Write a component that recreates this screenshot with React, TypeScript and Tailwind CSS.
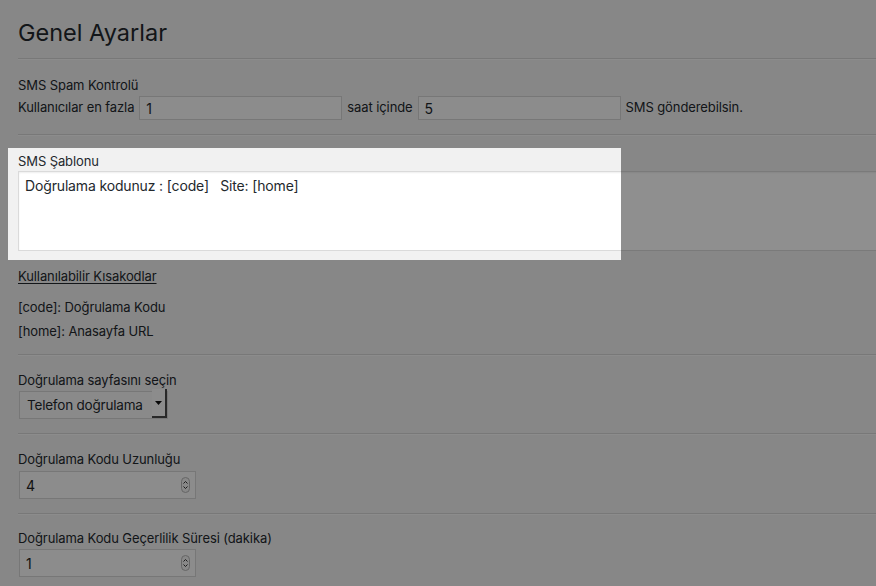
import React from "react";

const font = { fontFamily: "Inter, 'Noto Sans', 'Liberation Sans', sans-serif" };

function Divider() {
  return <div className="h-[2px] w-full border-t border-[#d6d6d6] border-b border-b-[#fafafa]" />;
}

function NumberField({ value }: { value: string }) {
  return (
    <div className="flex h-[28px] w-[177px] items-center justify-between border border-[#d4d4d4] bg-[#f9f9f9] pl-[6px] pr-[5px] text-[14px] text-[#222]">
      <span>{value}</span>
      <span className="flex h-[16px] w-[9px] flex-col items-center justify-center rounded-full border border-[#b5b5b5] bg-[#f3f3f3]">
        <svg width="5" height="10" viewBox="0 0 5 10" fill="none" stroke="#333" strokeWidth="1">
          <path d="M0.5 3.5 L2.5 1.5 L4.5 3.5" />
          <path d="M0.5 6.5 L2.5 8.5 L4.5 6.5" />
        </svg>
      </span>
    </div>
  );
}

export default function App() {
  return (
    <div
      className="relative h-[586px] w-[876px] overflow-hidden bg-[#f1f1f1] text-[13px] tracking-[-0.1px] text-[#23282d]"
      style={font}
    >
      <div className="pt-[18px]">
        <h1 className="pl-[18px] text-[23.5px] leading-[30px] font-normal tracking-normal">Genel Ayarlar</h1>
        <div className="mt-[10px] pl-[18px]">
          <Divider />
        </div>

        {/* spam kontrol */}
        <section className="pl-[18px] pt-[16px]">
          <div className="leading-[18px]">SMS Spam Kontrolü</div>
          <div className="mt-[2px] flex h-[24px] items-center gap-[5px]">
            <span>Kullanıcılar en fazla</span>
            <div className="flex h-[24px] w-[203px] items-center border border-[#d4d4d4] bg-[#f9f9f9] pl-[6px] text-[14px]">
              1
            </div>
            <span>saat içinde</span>
            <div className="flex h-[24px] w-[203px] items-center border border-[#d4d4d4] bg-[#f9f9f9] pl-[6px] text-[14px]">
              5
            </div>
            <span>SMS gönderebilsin.</span>
          </div>
          <div className="mt-[14px]">
            <Divider />
          </div>
        </section>

        {/* sablon */}
        <section className="pl-[18px] pt-[16px]">
          <div className="leading-[18px]">SMS Şablonu</div>
          <div className="mt-[1px] h-[80px] w-[900px] border border-[#dadada] bg-white px-[6px] pt-[5px] text-[14px] leading-[18px] tracking-[-0.15px] whitespace-pre shadow-[inset_0_1px_2px_rgba(0,0,0,0.07)]">
            {"Doğrulama kodunuz : [code]   Site: [home]"}
          </div>
          <div className="mt-[16px] leading-[18px] underline underline-offset-2">Kullanılabilir Kısakodlar</div>
          <div className="mt-[13px] leading-[18px]">[code]: Doğrulama Kodu</div>
          <div className="mt-[6px] leading-[18px]">[home]: Anasayfa URL</div>
          <div className="mt-[14px]">
            <Divider />
          </div>
        </section>

        {/* sayfa secimi */}
        <section className="pl-[18px] pt-[15px]">
          <div className="leading-[18px]">Doğrulama sayfasını seçin</div>
          <div className="mt-[2px] ml-[1px] flex h-[28px] w-[149px] items-stretch border border-[#d4d4d4] bg-[#f7f7f7] text-[13.5px] tracking-[-0.2px]">
            <span className="flex flex-1 items-center pl-[7px]">Telefon doğrulama</span>
            <span className="mt-[-3px] flex w-[15px] items-center justify-center border-r-2 border-b-2 border-[#4a4a4a] bg-[#fafafa]">
              <svg width="7" height="4" viewBox="0 0 7 4">
                <path d="M0 0 H7 L3.5 4 Z" fill="#111" />
              </svg>
            </span>
          </div>
          <div className="mt-[14px]">
            <Divider />
          </div>
        </section>

        {/* uzunluk */}
        <section className="pl-[18px] pt-[15px]">
          <div className="leading-[18px]">Doğrulama Kodu Uzunluğu</div>
          <div className="mt-[3px] ml-[1px]">
            <NumberField value="4" />
          </div>
          <div className="mt-[14px]">
            <Divider />
          </div>
        </section>

        {/* gecerlilik */}
        <section className="pl-[18px] pt-[14px]">
          <div className="leading-[18px]">Doğrulama Kodu Geçerlilik Süresi (dakika)</div>
          <div className="mt-[2px] ml-[1px]">
            <NumberField value="1" />
          </div>
        </section>
      </div>

      {/* tour highlight */}
      <div className="pointer-events-none absolute left-[8px] top-[148px] h-[112px] w-[613px] shadow-[0_0_0_2000px_rgba(0,0,0,0.44)]" />
    </div>
  );
}
